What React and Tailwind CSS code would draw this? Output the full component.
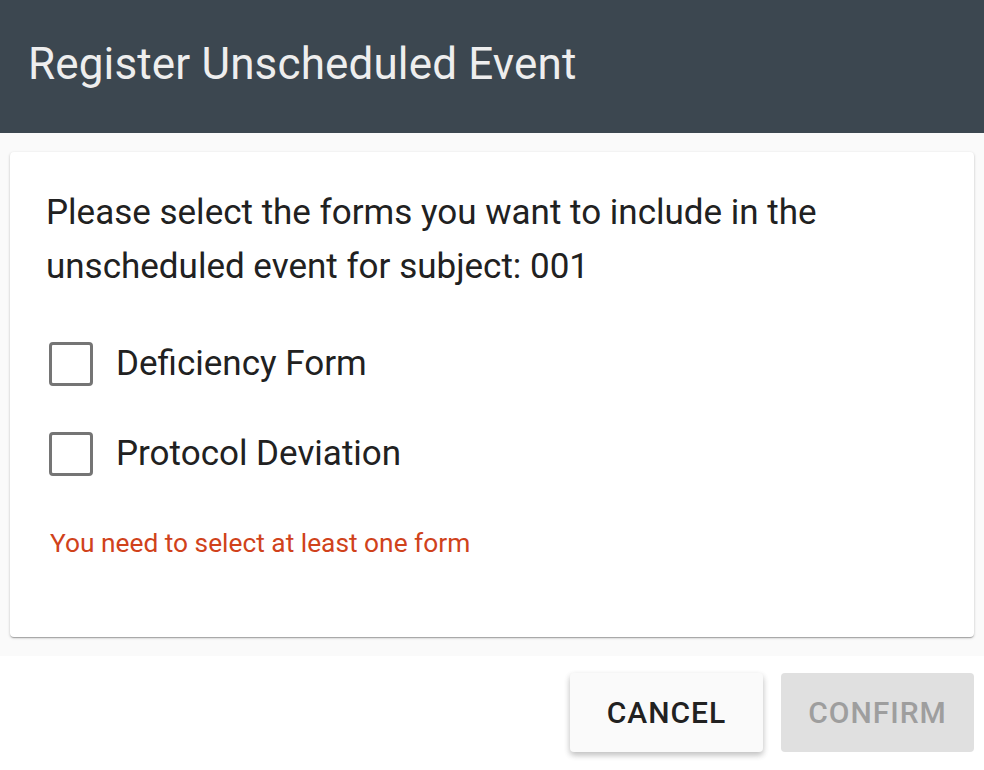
export default function App() {
  return (
    <div className="flex h-[770px] w-[984px] flex-col bg-white font-['Roboto',sans-serif]">
      <header className="flex h-[133px] items-center bg-[#3c4750] px-[28px] pb-[5px]">
        <h1 className="text-[44px] font-normal leading-none tracking-[0.15px] text-[#eeeeee]">
          Register Unscheduled Event
        </h1>
      </header>

      <div className="bg-[#fafafa] px-[10px] pt-[19px] pb-[19px]">
        <div className="h-[485px] rounded-[4px] bg-white px-[36px] pt-[34px] shadow-[0_1px_3px_rgba(0,0,0,0.2),0_1px_1px_rgba(0,0,0,0.14),0_2px_1px_-1px_rgba(0,0,0,0.12)]">
          <p className="text-[35px] leading-[54px] text-[#212121]">
            Please select the forms you want to include in the unscheduled event for subject: 001
          </p>

          <div className="mt-[25px] flex flex-col">
            {["Deficiency Form", "Protocol Deviation"].map((label) => (
              <label key={label} className="flex h-[90px] items-center gap-[23px] pl-[3px]">
                <span className="h-[44px] w-[44px] shrink-0 rounded-[4px] border-[3px] border-[#757575]" />
                <span className="text-[35px] text-[#212121]">{label}</span>
              </label>
            ))}
          </div>

          <p className="mt-[25px] pl-[4px] text-[26.3px] text-[#d0421b]">You need to select at least one form</p>
        </div>
      </div>

      <div className="flex justify-end gap-[18px] px-[10px] pt-[17px]">
        <button className="h-[79px] w-[193px] rounded-[4px] bg-[#fafafa] text-[30px] font-medium tracking-[1px] text-[#212121] shadow-[0_3px_6px_rgba(0,0,0,0.16),0_3px_6px_rgba(0,0,0,0.12)]">
          CANCEL
        </button>
        <button className="h-[79px] w-[193px] rounded-[4px] bg-[#e0e0e0] text-[30px] font-medium tracking-[1px] text-[#9e9e9e]">
          CONFIRM
        </button>
      </div>
    </div>
  );
}
